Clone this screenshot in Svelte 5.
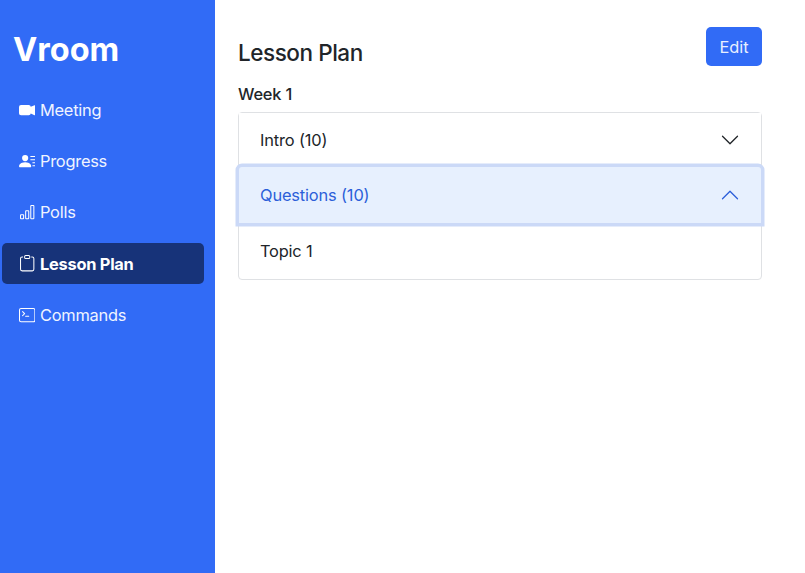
<script>
  const links = [
    { label: 'Meeting', paths: ['M0 5a2 2 0 0 1 2-2h7.5a2 2 0 0 1 1.983 1.738l3.11-1.382A1 1 0 0 1 16 4.269v7.462a1 1 0 0 1-1.406.913l-3.111-1.382A2 2 0 0 1 9.5 13H2a2 2 0 0 1-2-2V5z'] },
    { label: 'Progress', paths: ['M6 8a3 3 0 1 0 0-6 3 3 0 0 0 0 6zm-5 6s-1 0-1-1 1-4 6-4 6 3 6 4-1 1-1 1H1zM11 3.5a.5.5 0 0 1 .5-.5h4a.5.5 0 0 1 0 1h-4a.5.5 0 0 1-.5-.5zm.5 2.5a.5.5 0 0 0 0 1h4a.5.5 0 0 0 0-1h-4zm2 3a.5.5 0 0 0 0 1h2a.5.5 0 0 0 0-1h-2zm0 3a.5.5 0 0 0 0 1h2a.5.5 0 0 0 0-1h-2z'] },
    { label: 'Polls', paths: ['M4 11H2v3h2v-3zm5-4H7v7h2V7zm5-5v12h-2V2h2zm-2-1a1 1 0 0 0-1 1v12a1 1 0 0 0 1 1h2a1 1 0 0 0 1-1V2a1 1 0 0 0-1-1h-2zM6 7a1 1 0 0 1 1-1h2a1 1 0 0 1 1 1v7a1 1 0 0 1-1 1H7a1 1 0 0 1-1-1V7zm-5 4a1 1 0 0 1 1-1h2a1 1 0 0 1 1 1v3a1 1 0 0 1-1 1H2a1 1 0 0 1-1-1v-3z'] },
    { label: 'Lesson Plan', active: true, paths: ['M4 1.5H3a2 2 0 0 0-2 2V14a2 2 0 0 0 2 2h10a2 2 0 0 0 2-2V3.5a2 2 0 0 0-2-2h-1v1h1a1 1 0 0 1 1 1V14a1 1 0 0 1-1 1H3a1 1 0 0 1-1-1V3.5a1 1 0 0 1 1-1h1v-1z', 'M9.5 1a.5.5 0 0 1 .5.5v1a.5.5 0 0 1-.5.5h-3a.5.5 0 0 1-.5-.5v-1a.5.5 0 0 1 .5-.5h3zm-3-1A1.5 1.5 0 0 0 5 1.5v1A1.5 1.5 0 0 0 6.5 4h3A1.5 1.5 0 0 0 11 2.5v-1A1.5 1.5 0 0 0 9.5 0h-3z'] },
    { label: 'Commands', paths: ['M6 9a.5.5 0 0 1 .5-.5h3a.5.5 0 0 1 0 1h-3A.5.5 0 0 1 6 9zM3.854 4.146a.5.5 0 1 0-.708.708L4.793 6.5 3.146 8.146a.5.5 0 1 0 .708.708l2-2a.5.5 0 0 0 0-.708l-2-2z', 'M2 1a2 2 0 0 0-2 2v10a2 2 0 0 0 2 2h12a2 2 0 0 0 2-2V3a2 2 0 0 0-2-2H2zm12 1a1 1 0 0 1 1 1v10a1 1 0 0 1-1 1H2a1 1 0 0 1-1-1V3a1 1 0 0 1 1-1h12z'] }
  ];
  const chevron = 'M1.646 4.646a.5.5 0 0 1 .708 0L8 10.293l5.646-5.647a.5.5 0 0 1 .708.708l-6 6a.5.5 0 0 1-.708 0l-6-6a.5.5 0 0 1 0-.708z';
</script>

<div class="page">
  <aside class="sidebar">
    <div class="brand">Vroom</div>
    <nav>
      {#each links as link}
        <a href="#top" class="nav-link" class:active={link.active}>
          <svg width="16" height="16" viewBox="0 0 16 16" fill="currentColor" class="nav-icon">
            {#each link.paths as d}<path fill-rule="evenodd" {d}></path>{/each}
          </svg>
          <span>{link.label}</span>
        </a>
      {/each}
    </nav>
  </aside>

  <main>
    <div class="head">
      <h1>Lesson Plan</h1>
      <button class="edit">Edit</button>
    </div>
    <div class="week">Week 1</div>
    <div class="accordion">
      <button class="acc-btn">
        <span>Intro (10)</span>
        <svg width="20" height="20" viewBox="0 0 16 16" fill="currentColor"><path fill-rule="evenodd" d={chevron}></path></svg>
      </button>
      <button class="acc-btn open">
        <span>Questions (10)</span>
        <svg class="flip" width="20" height="20" viewBox="0 0 16 16" fill="currentColor"><path fill-rule="evenodd" d={chevron}></path></svg>
      </button>
      <div class="acc-body">Topic 1</div>
    </div>
  </main>
</div>

<style>
  :global(body) {
    margin: 0;
    background: #fff;
    font-family: Inter, "Liberation Sans", sans-serif;
    color: #212529;
  }

  .page {
    display: flex;
    height: 573px;
    overflow: hidden;
  }

  .sidebar {
    width: 215px;
    flex: none;
    box-sizing: border-box;
    background: #316bf6;
    color: #fff;
    padding: 30px 11px 0 2px;
  }

  .brand {
    font-size: 32.5px;
    line-height: 40px;
    font-weight: 700;
    padding-left: 11px;
    margin-bottom: 19.6px;
  }

  nav {
    display: flex;
    flex-direction: column;
    gap: 10.2px;
  }

  .nav-link {
    display: flex;
    align-items: center;
    gap: 4.6px;
    height: 41px;
    padding-left: 17px;
    border-radius: 5px;
    color: #fff;
    text-decoration: none;
    font-size: 16.4px;
    letter-spacing: -0.25px;
  }

  .nav-link span {
    color: #f0f4ff;
    line-height: 22px;
  }

  .nav-icon {
    width: 16.4px;
    height: 16.4px;
    flex: none;
  }

  .nav-link.active {
    background: #173379;
    font-weight: 700;
  }

  .nav-link.active span {
    color: #fff;
  }

  main {
    flex: 1;
    padding: 27px 43px 0 23px;
  }

  .head {
    display: flex;
    justify-content: space-between;
    align-items: flex-start;
    height: 54px;
  }

  h1 {
    margin: 12px 0 0;
    font-size: 22.5px;
    line-height: 27px;
    font-weight: 500;
    letter-spacing: -0.45px;
  }

  .edit {
    width: 56px;
    height: 39px;
    border: 0;
    border-radius: 5px;
    background: #316bf6;
    color: #e8efff;
    font: inherit;
    font-size: 16.4px;
  }

  .week {
    font-size: 16.4px;
    font-weight: 500;
    line-height: 25px;
    margin: 1px 0 5px;
    letter-spacing: -0.2px;
  }

  .accordion {
    border: 1px solid #dfe1e4;
    border-radius: 4px;
  }

  .acc-btn {
    display: flex;
    justify-content: space-between;
    align-items: center;
    width: 100%;
    height: 54px;
    box-sizing: border-box;
    padding: 0 21px;
    border: 0;
    background: #fff;
    color: #212529;
    font: inherit;
    font-size: 16.4px;
    letter-spacing: -0.15px;
    text-align: left;
  }

  .acc-btn.open {
    height: 56px;
    background: #e7f0fe;
    color: #2c5fd9;
    border-radius: 3px 3px 0 0;
    box-shadow: 0 0 0 3.5px #cbd9f7;
    position: relative;
  }

  .flip {
    transform: scaleY(-1);
  }

  .acc-body {
    height: 56px;
    box-sizing: border-box;
    padding: 0 21px;
    display: flex;
    align-items: center;
    font-size: 16.4px;
    letter-spacing: -0.2px;
  }
</style>
